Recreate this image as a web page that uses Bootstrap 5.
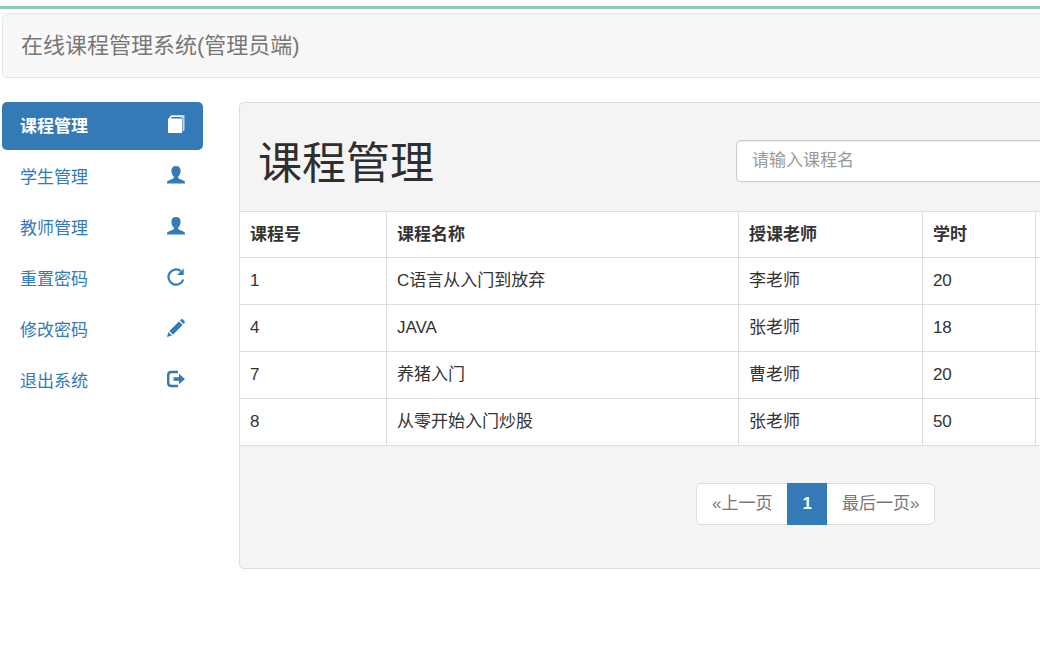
<!DOCTYPE html>
<html lang="zh-CN">
<head>
<meta charset="utf-8">
<meta name="viewport" content="width=device-width, initial-scale=1">
<title>在线课程管理系统</title>
<link href="https://cdn.jsdelivr.net/npm/bootstrap@5.3.0/dist/css/bootstrap.min.css" rel="stylesheet">
<style>
body{font:400 17px/24px "Liberation Sans","Noto Sans CJK SC",sans-serif;color:#333;background:#fff}
.top-rule{height:14px;padding-top:6px;border-bottom:1px solid #f3f3f3}
.top-rule::before{content:"";display:block;height:3px;background:#8accb3}
.site-bar{height:64px;margin-left:2px;margin-bottom:24px;padding:0 18px;background:#f8f8f8;border:1px solid #e7e7e7;border-right:0;border-radius:5px 0 0 5px}
.site-bar .navbar-brand{font-size:22px;line-height:32px;padding:0;color:#777}
.layout{padding-left:2px;gap:36px}
.side{width:201px;gap:3px}
.side .nav-link{height:48px;padding:2px 18px 0 18px;color:#337ab7;border-radius:5px}
.side .nav-link.active{background:#337ab7;color:#fff}
.side svg{width:18px;height:18px;margin-bottom:6px;fill:currentColor}
.panel{min-width:0;background:#f4f4f4;border:1px solid #ddd;border-right:0;border-radius:5px 0 0 5px}
.panel-top{height:108px;padding-top:8px}
.panel-top h1{width:62%;padding:6px 0 0 18px;font-size:44px;line-height:56px;color:#2e2e2e}
.search-box{height:42px;padding:0 15px;font-size:17px;border:1px solid #ccc;border-right:0;border-radius:5px 0 0 5px;box-shadow:inset 0 1px 1px #0001}
.search-box::placeholder{color:#999}
.courses{table-layout:fixed;border-color:#ddd;border-bottom:1px solid #ddd}
.courses>thead{vertical-align:middle}
.courses>:not(caption)>*>*{height:47px;padding:0 10px;color:#333;border-width:1px 1px 0 0;border-color:#ddd}
.courses>thead>tr>*{height:46px}
.courses>:not(caption)>*>:last-child{border-right:0}
.pager{padding:37px 0 43px 57%}
.pager .page-link{padding:8px 15px;color:#777;border-color:#ddd;font-size:17px;line-height:24px}
.pager .active .page-link{padding:8px 14px;background:#337ab7;border-color:#337ab7;color:#fff;font-weight:700}
</style>
</head>
<body>
<div class="top-rule"></div>
<header class="navbar site-bar"><a class="navbar-brand" href="#">在线课程管理系统(管理员端)</a></header>
<div class="layout d-flex align-items-start">
  <nav class="side nav nav-pills flex-column flex-shrink-0" aria-label="主菜单">
    <a class="nav-link active fw-bold d-flex align-items-center justify-content-between" aria-current="page" href="#">课程管理
      <svg viewBox="0 0 18 18"><path d="M1 4l3-3h11v1H5L3.500 3.500H15V18H1z"/><path d="M4 0h13.500v15l-2 2V3L14 2H3z" opacity=".7"/></svg></a>
    <a class="nav-link d-flex align-items-center justify-content-between" href="#">学生管理
      <svg viewBox="0 0 18 18"><path d="M9 0c3 0 4.600 1.800 4.600 4.800 0 2.500-.9 4.500-2.400 5.800v1.600l5.600 2.500c.8.400 1.200 1 1.200 2.800H0c0-1.800.4-2.400 1.200-2.800l5.600-2.500v-1.600C5.300 9.300 4.400 7.300 4.400 4.800 4.400 1.800 6 0 9 0z"/></svg></a>
    <a class="nav-link d-flex align-items-center justify-content-between" href="#">教师管理
      <svg viewBox="0 0 18 18"><path d="M9 0c3 0 4.600 1.800 4.600 4.800 0 2.500-.9 4.500-2.400 5.800v1.600l5.600 2.500c.8.400 1.200 1 1.200 2.800H0c0-1.800.4-2.400 1.200-2.800l5.600-2.500v-1.600C5.300 9.300 4.400 7.300 4.400 4.800 4.400 1.800 6 0 9 0z"/></svg></a>
    <a class="nav-link d-flex align-items-center justify-content-between" href="#">重置密码
      <svg viewBox="0 0 18 18"><path d="M16.300 11.500A7.600 7.600 0 1 1 13.700 3" fill="none" stroke="currentColor" stroke-width="2.200"/><path d="M16.700.5v6.600h-6.600z"/></svg></a>
    <a class="nav-link d-flex align-items-center justify-content-between" href="#">修改密码
      <svg viewBox="0 0 18 18"><path d="M0 18l1.400-5 3.600 3.600zM2.300 12L12 2.400 15.600 6 6 15.700zM13 1.500l1-1c.6-.6 1.300-.5 1.800 0l1.700 1.700c.6.6.6 1.200 0 1.800l-1 1z"/></svg></a>
    <a class="nav-link d-flex align-items-center justify-content-between" href="#">退出系统
      <svg viewBox="0 0 18 18"><path d="M11 2H4.500Q1.200 2 1.200 5v8q0 3 3.300 3H11" fill="none" stroke="currentColor" stroke-width="2.400"/><path d="M6.500 7.300H12V3.700L18 9l-6 5.300v-3.600H6.500z"/></svg></a>
  </nav>
  <main class="panel flex-grow-1">
    <div class="panel-top d-flex align-items-center">
      <h1 class="mb-0 fw-normal flex-shrink-0">课程管理</h1>
      <input class="form-control search-box" type="text" placeholder="请输入课程名" aria-label="课程名">
    </div>
    <table class="table courses bg-white align-middle mb-0">
      <colgroup><col style="width:18.300%"><col style="width:44%"><col style="width:23%"><col style="width:14.100%"><col></colgroup>
      <thead><tr><th scope="col">课程号</th><th scope="col">课程名称</th><th scope="col">授课老师</th><th scope="col">学时</th><td class="p-0"></td></tr></thead>
      <tbody>
        <tr><td>1</td><td>C语言从入门到放弃</td><td>李老师</td><td>20</td><td class="p-0"></td></tr>
        <tr><td>4</td><td>JAVA</td><td>张老师</td><td>18</td><td class="p-0"></td></tr>
        <tr><td>7</td><td>养猪入门</td><td>曹老师</td><td>20</td><td class="p-0"></td></tr>
        <tr><td>8</td><td>从零开始入门炒股</td><td>张老师</td><td>50</td><td class="p-0"></td></tr>
      </tbody>
    </table>
    <nav class="pager" aria-label="分页">
      <ul class="pagination mb-0">
        <li class="page-item"><a class="page-link" href="#">«上一页</a></li>
        <li class="page-item active"><a class="page-link" href="#">1</a></li>
        <li class="page-item"><a class="page-link" href="#">最后一页»</a></li>
      </ul>
    </nav>
  </main>
</div>
<script src="https://cdn.jsdelivr.net/npm/bootstrap@5.3.0/dist/js/bootstrap.bundle.min.js"></script>
</body>
</html>
